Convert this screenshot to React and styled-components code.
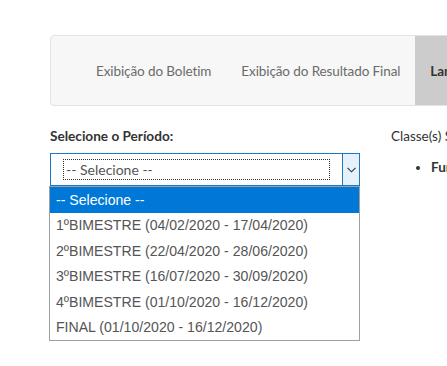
import React from 'react';
import styled, { createGlobalStyle } from 'styled-components';

const GlobalStyle = createGlobalStyle`
    html, body {
        margin: 0;
        padding: 0;
        overflow: hidden;
        background: #fff;
    }
    body {
        font-family: Lato, "Open Sans", sans-serif;
        color: #333;
    }
`;

const Page = styled.div`
    width: 447px;
    height: 366px;
    overflow: hidden;
    padding: 35px 0 0 50px;
    box-sizing: border-box;
`;

const TabBar = styled.ul`
    display: flex;
    align-items: stretch;
    width: 560px;
    height: 71px;
    margin: 0;
    padding: 0 0 0 30px;
    list-style: none;
    background: #f7f7f7;
    border: 1px solid #e3e3e3;
    border-radius: 4px;
    box-sizing: border-box;
    overflow: hidden;
`;

const Tab = styled.li`
    display: flex;
    align-items: center;
    padding: 0 15px;
    font-size: 13.5px;
    letter-spacing: -0.1px;
    white-space: nowrap;
    color: ${p => (p.$active ? '#333' : '#6b6b6b')};
    font-weight: ${p => (p.$active ? 700 : 400)};
    background: ${p => (p.$active ? '#cccccc' : 'transparent')};
`;

const Body = styled.div`
    display: flex;
    gap: 31px;
    margin-top: 21px;
`;

const LeftCol = styled.div`
    width: 310px;
    flex-shrink: 0;
    position: relative;
`;

const Label = styled.div`
    font-size: 13.6px;
    font-weight: 700;
    color: #333;
    line-height: 18px;
    margin-bottom: 8px;
`;

const SelectBox = styled.div`
    display: flex;
    height: 33px;
    border: 1px solid #1f76c2;
    box-sizing: border-box;
    background: #fff;
`;

const SelectValue = styled.div`
    flex: 1;
    display: flex;
    align-items: center;
    padding: 0 12px;
`;

const FocusRing = styled.div`
    flex: 1;
    height: 19px;
    border: 1px dotted #333;
    display: flex;
    align-items: center;
    padding-left: 2px;
    font-size: 14px;
    color: #555;
`;

const ArrowButton = styled.div`
    width: 16px;
    display: flex;
    align-items: center;
    justify-content: center;
    background: #e5f1fb;
    border-left: 1px solid #1f76c2;
`;

const OptionList = styled.ul`
    position: absolute;
    left: -1px;
    top: 59px;
    width: 311px;
    margin: 0;
    padding: 0;
    list-style: none;
    background: #fff;
    border: 1px solid #a0a0a0;
    box-sizing: border-box;
    z-index: 2;
`;

const Option = styled.li`
    height: 25.5px;
    display: flex;
    align-items: center;
    padding-left: 6px;
    font-family: "Liberation Sans", Arial, sans-serif;
    font-size: 14.1px;
    white-space: nowrap;
    color: ${p => (p.$selected ? '#fff' : '#555')};
    background: ${p => (p.$selected ? '#0078d7' : 'transparent')};
`;

const RightCol = styled.div`
    white-space: nowrap;
`;

const RightTitle = styled.div`
    font-size: 13.5px;
    line-height: 18px;
    color: #333;
`;

const ClassList = styled.ul`
    margin: 14px 0 0;
    padding-left: 40px;
    font-size: 13.5px;
    font-weight: 700;
    color: #333;
`;

const periods = [
    '-- Selecione --',
    '1ºBIMESTRE (04/02/2020 - 17/04/2020)',
    '2ºBIMESTRE (22/04/2020 - 28/06/2020)',
    '3ºBIMESTRE (16/07/2020 - 30/09/2020)',
    '4ºBIMESTRE (01/10/2020 - 16/12/2020)',
    'FINAL (01/10/2020 - 16/12/2020)',
];

const Chevron = () => (
    <svg width="9" height="6" viewBox="0 0 9 6" fill="none">
        <path d="M0.5 0.8 L4.5 4.8 L8.5 0.8" stroke="#333" strokeWidth="1.1" />
    </svg>
);

const App = () => {
    return (
        <Page>
            <GlobalStyle />

            <TabBar>
                <Tab>Exibição do Boletim</Tab>
                <Tab>Exibição do Resultado Final</Tab>
                <Tab $active>Lançamento de Notas</Tab>
            </TabBar>

            <Body>
                <LeftCol>
                    <Label>Selecione o Período:</Label>

                    <SelectBox>
                        <SelectValue>
                            <FocusRing>-- Selecione --</FocusRing>
                        </SelectValue>
                        <ArrowButton>
                            <Chevron />
                        </ArrowButton>
                    </SelectBox>

                    <OptionList>
                        {periods.map((p, i) => (
                            <Option key={p} $selected={i === 0}>
                                {p}
                            </Option>
                        ))}
                    </OptionList>
                </LeftCol>

                <RightCol>
                    <RightTitle>Classe(s) Selecionada(s):</RightTitle>
                    <ClassList>
                        <li>Fundamental II - 6º Ano A</li>
                    </ClassList>
                </RightCol>
            </Body>
        </Page>
    );
};

export default App;
